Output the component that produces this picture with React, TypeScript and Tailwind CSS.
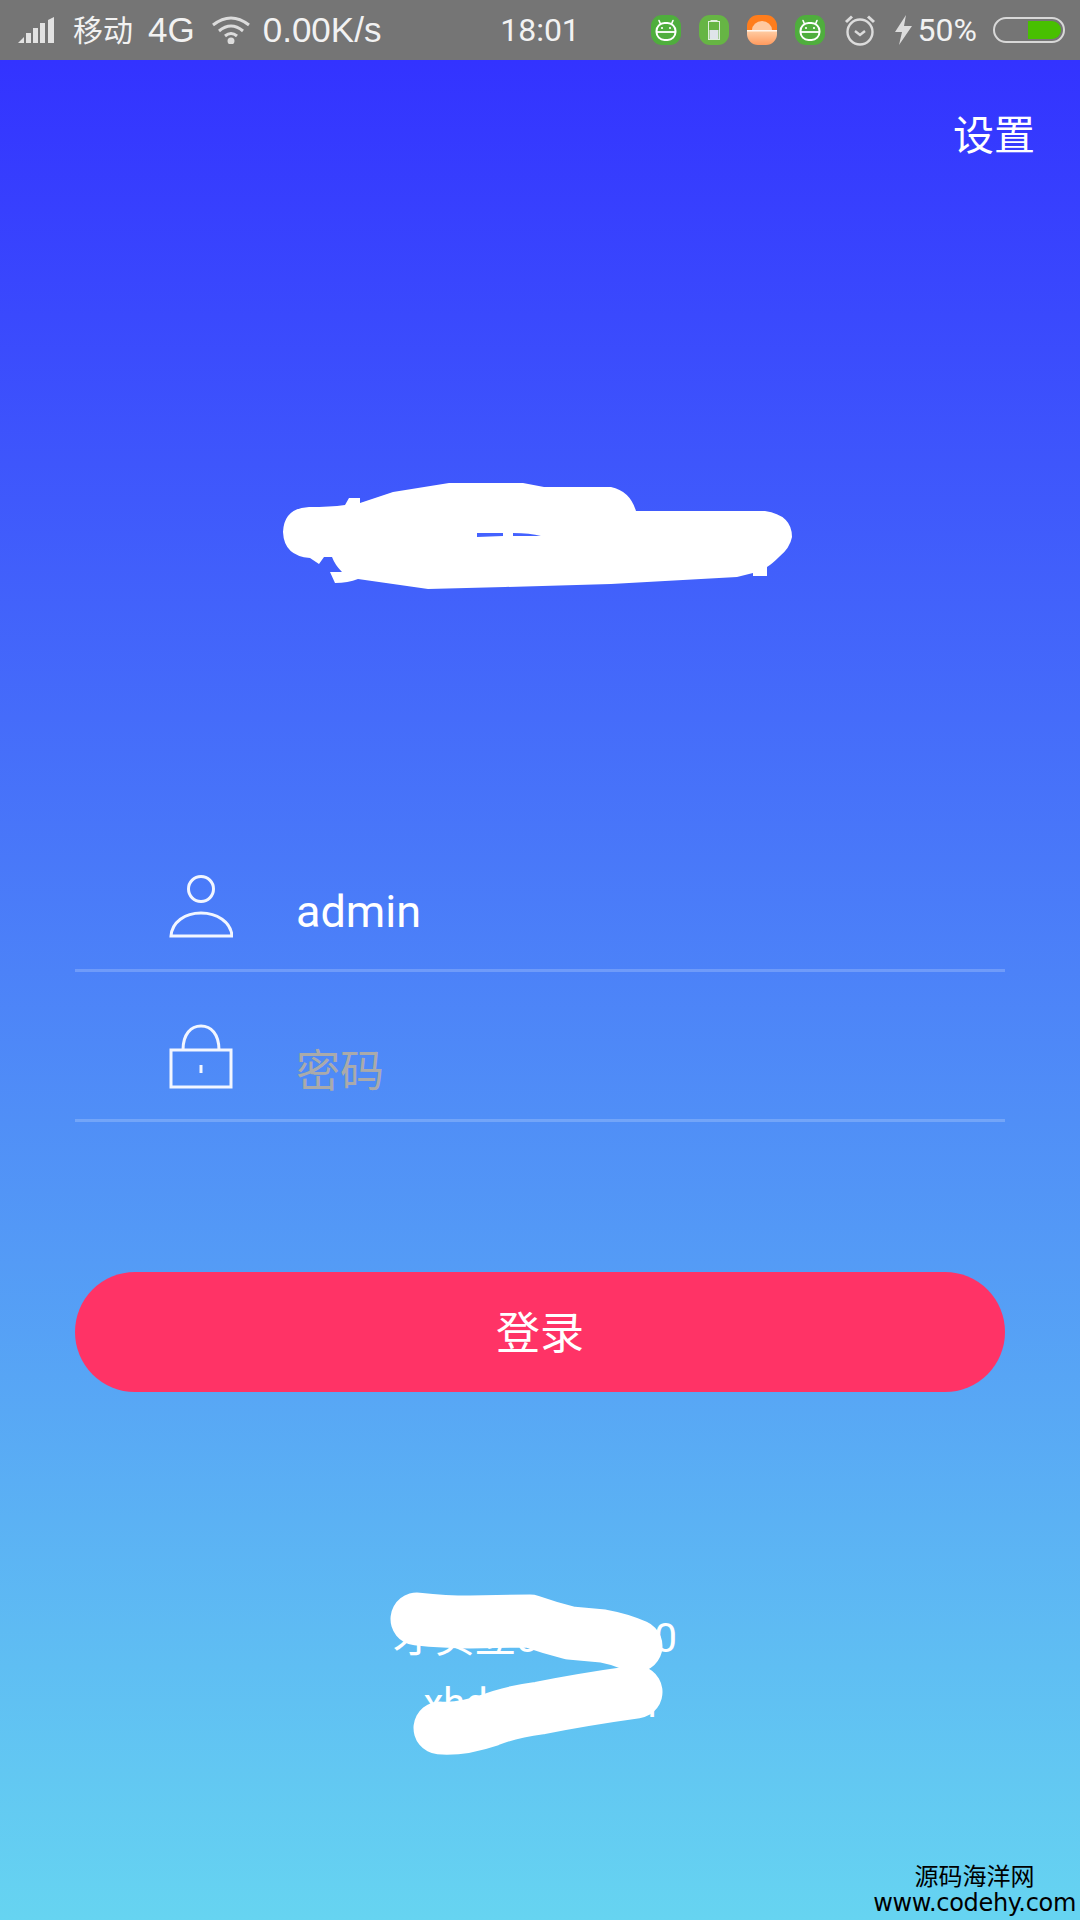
const cjk = "font-['Roboto','Noto_Sans_CJK_SC',sans-serif]";

function AndroidBadge() {
  return (
    <svg width="30" height="30" viewBox="0 0 30 30">
      <rect width="30" height="30" rx="11" fill="#4fae3d" />
      <path d="M8 5.500 L9.500 9 M22 5.500 L20.500 9" stroke="#fff" strokeWidth="1.600" strokeLinecap="round" />
      <rect x="5.500" y="8" width="19" height="17" rx="8" fill="none" stroke="#fff" strokeWidth="2" />
      <path d="M6 17 H24" stroke="#fff" strokeWidth="1.800" />
      <circle cx="11" cy="13" r="1.100" fill="#fff" />
      <circle cx="19" cy="13" r="1.100" fill="#fff" />
    </svg>
  );
}

function BatteryBadge() {
  return (
    <svg width="30" height="30" viewBox="0 0 30 30">
      <rect width="30" height="30" rx="11" fill="#66b544" />
      <rect x="9.500" y="6.500" width="11" height="18" fill="none" stroke="#dfeedd" strokeWidth="1" />
      <rect x="11.500" y="5" width="7" height="1.500" fill="#dfeedd" />
      <rect x="10.500" y="15" width="9" height="9" fill="#dfe4ea" />
    </svg>
  );
}

function SunsetBadge() {
  return (
    <svg width="30" height="30" viewBox="0 0 30 30">
      <defs>
        <linearGradient id="sunsetLow" x1="0" y1="0" x2="0" y2="1">
          <stop offset="0" stopColor="#ffd0a8" />
          <stop offset="1" stopColor="#ff9a5e" />
        </linearGradient>
      </defs>
      <path d="M0 15 V11 A11 11 0 0 1 11 0 H19 A11 11 0 0 1 30 11 V15 Z" fill="#ff7d1c" />
      <path d="M0 15 H30 V19 A11 11 0 0 1 19 30 H11 A11 11 0 0 1 0 19 Z" fill="url(#sunsetLow)" />
      <path d="M5 15 A10 9 0 0 1 25 15 Z" fill="#ffc9a0" />
      <rect x="0" y="15" width="30" height="1.500" fill="#fff" opacity="0.8" />
    </svg>
  );
}

function StatusBar() {
  return (
    <div className="h-[60px] bg-[#757575] grid grid-cols-[1fr_auto_1fr] items-center text-[#f2f2f2] text-[32px] font-['Roboto',sans-serif]">
      <div className="flex items-center pl-[18px] font-['Liberation_Sans',sans-serif] text-[35px]">
        <svg width="37" height="26" viewBox="0 0 37 26" fill="#e2e2e2">
          <path d="M0 26 L6 20 V26 Z" />
          <rect x="8" y="16" width="5" height="10" />
          <rect x="15" y="11" width="5" height="15" />
          <rect x="22" y="6" width="5" height="20" />
          <path d="M30 3 L36 0 V26 H30 Z" />
        </svg>
        <span className={`ml-[18px] text-[30px] ${cjk}`}>移动</span>
        <span className="ml-[15px]">4G</span>
        <svg className="ml-[17px]" width="38" height="28" viewBox="0 0 38 28" fill="none" stroke="#dcdcdc" strokeWidth="3">
          <path d="M1 9 Q19 -5 37 9" />
          <path d="M7 15 Q19 5 31 15" />
          <path d="M13 20 Q19 15 25 20" />
          <circle cx="19" cy="25" r="2" fill="#dcdcdc" />
        </svg>
        <span className="ml-[13px]">0.00K/s</span>
      </div>
      <span>18:01</span>
      <div className="flex items-center justify-end pr-[15px]">
        <AndroidBadge />
        <div className="ml-[18px]">
          <BatteryBadge />
        </div>
        <div className="ml-[18px]">
          <SunsetBadge />
        </div>
        <div className="ml-[18px]">
          <AndroidBadge />
        </div>
        <svg className="ml-[19px]" width="32" height="32" viewBox="0 0 32 32" fill="none" stroke="#dcdcdc" strokeWidth="2.400">
          <circle cx="16" cy="18" r="12.500" />
          <path d="M11 17 L16 21 L21 17" />
          <path d="M2 8 L8 2.500 M30 8 L24 2.500" strokeWidth="3" />
        </svg>
        <svg className="ml-[19px]" width="17" height="30" viewBox="0 0 17 30" fill="#dcdcdc">
          <path d="M11 0 L0 17 H7 L4 30 L17 11 H9 Z" />
        </svg>
        <span className="ml-[6px]">50%</span>
        <div className="ml-[16px] w-[72px] h-[26px] rounded-full border-2 border-[#d8d8d8] flex justify-end items-center pr-[2px]">
          <div className="w-[33px] h-[18px] rounded-r-full bg-[#48c000]" />
        </div>
      </div>
    </div>
  );
}

function UserIcon() {
  return (
    <svg width="64" height="64" viewBox="0 0 64 64" fill="none" stroke="#f2f6ff" strokeWidth="3">
      <circle cx="32" cy="14" r="12.500" />
      <path d="M2 61 H63 C62 47 48 38 32 38 C16 38 3 47 2 61 Z" />
    </svg>
  );
}

function LockIcon() {
  return (
    <svg width="64" height="65" viewBox="0 0 64 65" fill="none" stroke="#f2f6ff" strokeWidth="3">
      <rect x="2" y="26" width="60" height="37" />
      <path d="M14 26 C14 10 22 2 32 2 C42 2 50 10 50 26" />
      <path d="M32 41 V49" />
    </svg>
  );
}

function FieldRow({ icon, children }: { icon: React.ReactNode; children: React.ReactNode }) {
  return (
    <div className="h-[150px] border-b-[3px] border-white/20 flex items-end pb-[30px]">
      <div className="ml-[94px] w-[64px]">{icon}</div>
      <div className="ml-[63px]">{children}</div>
    </div>
  );
}

export default function App() {
  return (
    <div className={`relative w-[1080px] h-[1920px] overflow-hidden flex flex-col ${cjk}`}>
      <StatusBar />
      <div className="flex-1 bg-[linear-gradient(180deg,#3333ff,#66d4f1)] text-white flex flex-col">
        <div className="flex justify-end pt-[52px] pr-[45px] text-[41px] leading-[48px]">设置</div>
        <div className="mt-[662px] px-[75px]">
          <FieldRow icon={<UserIcon />}>
            <span className="text-[45px] leading-[60px] block mb-[-3px]">admin</span>
          </FieldRow>
          <FieldRow icon={<LockIcon />}>
            <span className="text-[44px] leading-[60px] block mb-[-13px] text-[#aaaaaa]">密码</span>
          </FieldRow>
          <button className="mt-[150px] w-full h-[120px] pt-[4px] rounded-full bg-[#ff3366] text-[44px] text-white">登录</button>
        </div>
        <div className="mt-[213px] text-center text-[40px] leading-[66px]">
          <p className="pr-[10px] text-[41px]">才实立0000000</p>
          <p>xhdxxxx.com</p>
        </div>
      </div>

      {/* hand-drawn scribbles lying over the title and the footer text */}
      <svg className="absolute inset-0 pointer-events-none" width="1080" height="1920" viewBox="0 0 1080 1920">
        <path
          fill="#fff"
          d="M309 507 Q330 507 345 505 L349 498 H360 V503 L393 492 L449 483 L523 483 L544 487 L611 487 Q630 491 636 511 L765 511 Q792 515 792 537 Q790 548 779 557 Q772 564 767 567 V576 H753 V573 L737 577 L611 584 L505 587 L428 589 L358 579 Q348 583 335 583 L330 572 H342 Q335 565 332 557 H324 L319 564 L310 558 Q284 556 283 532 Q284 508 309 507 Z"
        />
        <path fill="#4462ff" d="M477 533 H503 V536 L477 537 Z M513 533 Q530 533 541 536 L513 536 Z" />
        <path
          fill="none"
          stroke="#fff"
          strokeWidth="53"
          strokeLinecap="round"
          strokeLinejoin="round"
          d="M417 1619 Q445 1622 470 1622 L530 1621 Q550 1628 570 1633 L603 1636 Q620 1639 636 1646"
        />
        <path
          fill="none"
          stroke="#fff"
          strokeWidth="53"
          strokeLinecap="round"
          strokeLinejoin="round"
          d="M636 1692 C600 1697 570 1702 540 1708 Q510 1712 490 1720 Q460 1730 440 1728"
        />
      </svg>

      <div className="absolute right-[4px] bottom-[4px] text-black text-center leading-none">
        <p className="text-[24px] leading-[26px]">源码海洋网</p>
        <p className="text-[24px] leading-[26px] font-['DejaVu_Sans',sans-serif] tracking-[-0.3px]">www.codehy.com</p>
      </div>
    </div>
  );
}
